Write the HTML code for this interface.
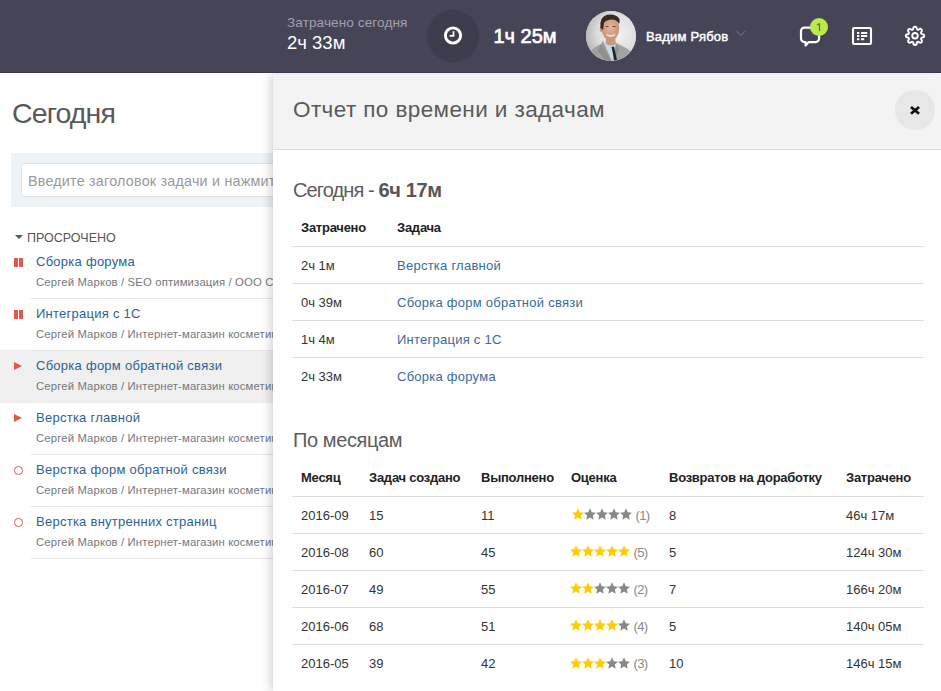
<!DOCTYPE html>
<html><head><meta charset="utf-8">
<style>
*{margin:0;padding:0;box-sizing:border-box}
html,body{width:941px;height:691px;overflow:hidden;background:#fff;font-family:"Liberation Sans",sans-serif;position:relative}
.abs{position:absolute;white-space:nowrap}
#hdr{position:absolute;left:0;top:0;width:941px;height:73px;background:#464558;border-bottom:1px solid #3c3b4c}
.muted{color:#a09fad;font-size:13.6px;letter-spacing:0.08px;left:287px;top:15px;line-height:16px}
.spent{color:#fff;font-size:18.5px;left:287px;top:33px;line-height:20px}
.clockc{position:absolute;left:427px;top:10px;width:52px;height:52px;border-radius:50%;background:#3e3d4e}
.timer{color:#fff;font-size:20px;letter-spacing:0px;font-weight:400;-webkit-text-stroke:0.7px #fff;left:493.5px;top:25px;line-height:22px}
.avatar{position:absolute;left:586px;top:11px;width:50px;height:50px;border-radius:50%;overflow:hidden;background:#ddd}
.uname{color:#fff;font-size:13px;letter-spacing:0.2px;font-weight:400;-webkit-text-stroke:0.45px #fff;left:646px;top:29px;line-height:15px}
#page h1{position:absolute;left:12px;top:97.3px;font-size:28.5px;letter-spacing:-0.9px;font-weight:400;color:#595959;line-height:32px}
.addbox{position:absolute;left:11px;top:153px;width:300px;height:54px;background:#eef3f7}
.inp{position:absolute;left:21px;top:163px;width:300px;height:34px;background:#fff;border:1px solid #e2e5e8;border-radius:3px}
.ph{color:#999;font-size:14.3px;letter-spacing:0.23px;left:28px;top:173px;line-height:17px}
.sec{color:#555;font-size:12.5px;left:27px;top:231px;line-height:14px}
.tri{position:absolute;left:14.9px;top:234.8px;width:0;height:0;border-left:4.2px solid transparent;border-right:4.2px solid transparent;border-top:4.5px solid #555}
#panel{position:absolute;left:273px;top:74px;width:668px;height:617px;background:#fff;box-shadow:-3px 0 9px rgba(0,0,0,0.17)}
.phead{position:absolute;left:0;top:0;width:668px;height:76px;background:#f3f3f3;border-bottom:1px solid #dedede}
.ptitle{color:#5a5a5a;font-size:22.5px;letter-spacing:0.4px;left:20px;top:23px;line-height:26px}
.close{position:absolute;left:622px;top:16px;width:40px;height:40px;border-radius:50%;background:#e7e7e7}
.h2{color:#5c5c5c;font-size:20px;letter-spacing:-0.9px;left:20px;line-height:22px}
table{position:absolute;border-collapse:collapse;font-size:13px}
th{font-weight:700;color:#222;text-align:left;height:36px;padding:0 0 0 9px;letter-spacing:-0.25px;border-bottom:1px solid #dddddd;white-space:nowrap}
td{color:#333;height:37px;padding:2px 0 0 9px;border-top:1px solid #dddddd;white-space:nowrap}
tr:nth-child(2) td{border-top:none}
#hdr,.muted,.spent,.clockc,.timer,.avatar,.uname,#hicons{z-index:5}
#panel{z-index:1}
a{color:#3a6b9a;text-decoration:none;letter-spacing:0.25px}
.ic{position:absolute}
.pause{left:14px;top:258px;width:9px;height:9px;border-left:4px solid #e0574f;border-right:4px solid #e0574f}
.play{left:14px;top:258px;width:0;height:0;border-top:4.6px solid transparent;border-bottom:4.6px solid transparent;border-left:8.2px solid #e0574f}
.circ{left:14.2px;top:258px;width:8.7px;height:8.7px;border:1.6px solid #e0574f;border-radius:50%}
.hlr{position:absolute;left:0;top:350px;width:273px;height:53px;background:#f0f0f0}
.tt{left:36px;top:254px;font-size:13px;letter-spacing:0.26px;color:#2c6394;line-height:16px}
.ts{left:36px;top:276px;font-size:11.3px;letter-spacing:0.15px;color:#747880;line-height:13px}
.ln{position:absolute;left:31px;width:242px;height:1px;background:#e6e6e6}
.close svg{position:absolute;left:0;top:0}
.stars{display:inline-block;vertical-align:-1.3px}
.cnt{color:#888;margin-left:2.6px;letter-spacing:-0.7px}

</style></head><body>
<div id="hdr"></div>
<div class="abs muted">Затрачено сегодня</div>
<div class="abs spent">2ч 33м</div>
<div class="clockc"></div>
<div class="abs timer">1ч 25м</div>
<div class="avatar"><svg width="50" height="50" viewBox="0 0 50 50">
<defs><radialGradient id="bgg" cx="0.62" cy="0.45" r="0.65"><stop offset="0" stop-color="#f4f4f4"/><stop offset="0.6" stop-color="#dedede"/><stop offset="1" stop-color="#b4b4b4"/></radialGradient>
<radialGradient id="skin" cx="0.5" cy="0.45" r="0.6"><stop offset="0" stop-color="#e2b59a"/><stop offset="1" stop-color="#c28f74"/></radialGradient></defs>
<rect width="50" height="50" fill="url(#bgg)"/>
<path d="M16 29 Q22 33 30 31 L33 35 L31 50 L23 50 L16 36 Z" fill="#c9d9e8"/>
<path d="M0 50 L3 42 Q8 36 15 33 L17 30 L26 50 Z" fill="#9f9f9f"/>
<path d="M15 33 L22 44 L25 50 L20 50 L12 40 Z" fill="#8f8f8f"/>
<path d="M30 32 L36 35 Q44 38 48 45 L50 50 L28 50 Z" fill="#a2a2a2"/>
<path d="M30 33 L33 38 L29 50 L27 48 Z" fill="#909090"/>
<path d="M25.5 36 L28 35.5 L31 49 L28.5 50 Z" fill="#1c2230"/>
<path d="M20 26 L29 26 L30 33 Q25 36 20 33 Z" fill="#c99a7e"/>
<ellipse cx="24.5" cy="17.5" rx="8.8" ry="12" fill="url(#skin)"/>
<ellipse cx="15.5" cy="18" rx="1.8" ry="3" fill="#c9937a"/>
<path d="M14.5 17 Q13 6 21 3.8 Q30 2.2 33.5 8 Q34 11 33 13 Q31 8.5 26 8.5 Q20 8.5 18 12 L17 19 Z" fill="#3a2a22"/>
<path d="M20.5 23.5 Q25 26.5 29 23.5" fill="none" stroke="#f2ece6" stroke-width="1.5"/>
<path d="M19.5 15.5 H22.5 M26.5 15.5 H29.5" stroke="#6b4a3a" stroke-width="1"/>
</svg></div>
<div class="abs uname">Вадим Рябов</div>

<svg class="abs" id="hicons" style="left:0;top:0" width="941" height="73" viewBox="0 0 941 73">
<circle cx="453" cy="35.5" r="7.6" fill="none" stroke="#fff" stroke-width="2.9"/>
<path d="M453.5 31.2 V35.8 H449.6" fill="none" stroke="#fff" stroke-width="1.8"/>
<path d="M736.6 31.3 L740.8 35.5 L745 31.3" fill="none" stroke="#838294" stroke-width="1"/>
<path d="M804.5 27.6 H815.6 A3.5 3.5 0 0 1 819.1 31.1 V38.6 A3.5 3.5 0 0 1 815.6 42.1 H808.6 L805.6 45.6 V42.1 H804.5 A3.5 3.5 0 0 1 801 38.6 V31.1 A3.5 3.5 0 0 1 804.5 27.6 Z" fill="none" stroke="#fff" stroke-width="2.2" stroke-linejoin="round"/>
<circle cx="819" cy="27" r="9" fill="#b9eb4b"/><path d="M819.5 23.2 V31 M819.5 23.4 L817 25.3" fill="none" stroke="#7a6a30" stroke-width="1.2"/>
<rect x="853" y="28" width="18" height="16" rx="1" fill="none" stroke="#fff" stroke-width="2.1"/>
<rect x="857" y="32" width="2.3" height="2" fill="#fff"/><rect x="857" y="35" width="2.3" height="2" fill="#fff"/><rect x="857" y="38.2" width="2.3" height="2" fill="#fff"/>
<rect x="861" y="32" width="6.2" height="2" fill="#fff"/><rect x="861" y="35" width="6.2" height="2" fill="#fff"/><rect x="861" y="38.2" width="3.2" height="2" fill="#fff"/>
<g transform="translate(905 25.8) scale(0.8333)" fill="none" stroke="#fff" stroke-width="2.3" stroke-linecap="round" stroke-linejoin="round"><circle cx="12" cy="12" r="3.3"/><path d="M19.4 15a1.650 1.650 0 0 0 .33 1.820l.06.06a2 2 0 0 1 0 2.830 2 2 0 0 1-2.830 0l-.06-.06a1.650 1.650 0 0 0-1.820-.33 1.650 1.650 0 0 0-1 1.510V21a2 2 0 0 1-2 2 2 2 0 0 1-2-2v-.09A1.650 1.650 0 0 0 9 19.400a1.650 1.650 0 0 0-1.820.33l-.06.06a2 2 0 0 1-2.830 0 2 2 0 0 1 0-2.830l.06-.06a1.650 1.650 0 0 0 .33-1.820 1.650 1.650 0 0 0-1.510-1H3a2 2 0 0 1-2-2 2 2 0 0 1 2-2h.09A1.650 1.650 0 0 0 4.600 9a1.650 1.650 0 0 0-.33-1.820l-.06-.06a2 2 0 0 1 0-2.830 2 2 0 0 1 2.830 0l.06.06a1.650 1.650 0 0 0 1.820.33H9a1.650 1.650 0 0 0 1-1.510V3a2 2 0 0 1 2-2 2 2 0 0 1 2 2v.09a1.650 1.650 0 0 0 1 1.510 1.650 1.650 0 0 0 1.820-.33l.06-.06a2 2 0 0 1 2.830 0 2 2 0 0 1 0 2.830l-.06.06a1.650 1.650 0 0 0-.33 1.820V9a1.650 1.650 0 0 0 1.510 1H21a2 2 0 0 1 2 2 2 2 0 0 1-2 2h-.09a1.650 1.650 0 0 0-1.510 1z"/></g>
</svg>

<div id="page">
<h1>Сегодня</h1>
<div class="addbox"></div>
<div class="inp"></div>
<div class="abs ph">Введите заголовок задачи и нажмите Enter</div>
<div class="tri"></div>
<div class="abs sec">ПРОСРОЧЕНО</div>
<div class="hlr"></div>
<div class="ic pause" style="margin-top:0px"></div><div class="abs tt" style="margin-top:0px">Сборка форума</div><div class="abs ts" style="margin-top:0px">Сергей Марков / SEO оптимизация / ООО Строй</div><div class="ln" style="top:298px"></div>
<div class="ic pause" style="margin-top:52px"></div><div class="abs tt" style="margin-top:52px">Интеграция с 1С</div><div class="abs ts" style="margin-top:52px">Сергей Марков / Интернет-магазин косметики</div><div class="ln" style="top:350px"></div>
<div class="ic play" style="margin-top:104px"></div><div class="abs tt" style="margin-top:104px">Сборка форм обратной связи</div><div class="abs ts" style="margin-top:104px">Сергей Марков / Интернет-магазин косметики</div>
<div class="ic play" style="margin-top:156px"></div><div class="abs tt" style="margin-top:156px">Верстка главной</div><div class="abs ts" style="margin-top:156px">Сергей Марков / Интернет-магазин косметики</div><div class="ln" style="top:454px"></div>
<div class="ic circ" style="margin-top:208px"></div><div class="abs tt" style="margin-top:208px">Верстка форм обратной связи</div><div class="abs ts" style="margin-top:208px">Сергей Марков / Интернет-магазин косметики</div><div class="ln" style="top:506px"></div>
<div class="ic circ" style="margin-top:260px"></div><div class="abs tt" style="margin-top:260px">Верстка внутренних страниц</div><div class="abs ts" style="margin-top:260px">Сергей Марков / Интернет-магазин косметики</div><div class="ln" style="top:558px"></div>
</div>

<div id="panel">
<div class="phead"></div>
<div class="abs ptitle">Отчет по времени и задачам</div>
<div class="close"><svg width="40" height="40"><path d="M16 17 L24 23.7 M24 17 L16 23.7" stroke="#111" stroke-width="2.8" stroke-linecap="butt"/></svg></div>
<div class="abs h2" style="top:105px">Сегодня - <b style="letter-spacing:-0.35px;color:#555">6ч 17м</b></div>
<table style="left:19px;top:136px;width:632px">
<tr><th style="width:96px">Затрачено</th><th>Задача</th></tr>
<tr><td>2ч 1м</td><td><a>Верстка главной</a></td></tr>
<tr><td>0ч 39м</td><td><a>Сборка форм обратной связи</a></td></tr>
<tr><td>1ч 4м</td><td><a>Интеграция с 1С</a></td></tr>
<tr><td>2ч 33м</td><td><a>Сборка форума</a></td></tr>
</table>
<div class="abs h2" style="top:355.3px;letter-spacing:-0.4px">По месяцам</div>
<table style="left:19px;top:386px;width:632px">
<tr><th style="width:68px">Месяц</th><th style="width:112px">Задач создано</th><th style="width:90px">Выполнено</th><th style="width:98px">Оценка</th><th style="width:177px">Возвратов на доработку</th><th>Затрачено</th></tr>
<tr><td>2016-09</td><td>15</td><td>11</td><td><svg class="stars" style="margin-left:1px" width="61" height="13" viewBox="0 0 61 13"><polygon points="6.00,0.30 7.76,4.17 11.99,4.65 8.85,7.53 9.70,11.70 6.00,9.60 2.30,11.70 3.15,7.53 0.01,4.65 4.24,4.17" fill="#ffcc00"/><polygon points="18.00,0.30 19.76,4.17 23.99,4.65 20.85,7.53 21.70,11.70 18.00,9.60 14.30,11.70 15.15,7.53 12.01,4.65 16.24,4.17" fill="#888888"/><polygon points="30.00,0.30 31.76,4.17 35.99,4.65 32.85,7.53 33.70,11.70 30.00,9.60 26.30,11.70 27.15,7.53 24.01,4.65 28.24,4.17" fill="#888888"/><polygon points="42.00,0.30 43.76,4.17 47.99,4.65 44.85,7.53 45.70,11.70 42.00,9.60 38.30,11.70 39.15,7.53 36.01,4.65 40.24,4.17" fill="#888888"/><polygon points="54.00,0.30 55.76,4.17 59.99,4.65 56.85,7.53 57.70,11.70 54.00,9.60 50.30,11.70 51.15,7.53 48.01,4.65 52.24,4.17" fill="#888888"/></svg><span class="cnt">(1)</span></td><td>8</td><td>46ч 17м</td></tr>
<tr><td>2016-08</td><td>60</td><td>45</td><td><svg class="stars" style="margin-left:-1px" width="61" height="13" viewBox="0 0 61 13"><polygon points="6.00,0.30 7.76,4.17 11.99,4.65 8.85,7.53 9.70,11.70 6.00,9.60 2.30,11.70 3.15,7.53 0.01,4.65 4.24,4.17" fill="#ffcc00"/><polygon points="18.00,0.30 19.76,4.17 23.99,4.65 20.85,7.53 21.70,11.70 18.00,9.60 14.30,11.70 15.15,7.53 12.01,4.65 16.24,4.17" fill="#ffcc00"/><polygon points="30.00,0.30 31.76,4.17 35.99,4.65 32.85,7.53 33.70,11.70 30.00,9.60 26.30,11.70 27.15,7.53 24.01,4.65 28.24,4.17" fill="#ffcc00"/><polygon points="42.00,0.30 43.76,4.17 47.99,4.65 44.85,7.53 45.70,11.70 42.00,9.60 38.30,11.70 39.15,7.53 36.01,4.65 40.24,4.17" fill="#ffcc00"/><polygon points="54.00,0.30 55.76,4.17 59.99,4.65 56.85,7.53 57.70,11.70 54.00,9.60 50.30,11.70 51.15,7.53 48.01,4.65 52.24,4.17" fill="#ffcc00"/></svg><span class="cnt">(5)</span></td><td>5</td><td>124ч 30м</td></tr>
<tr><td>2016-07</td><td>49</td><td>55</td><td><svg class="stars" style="margin-left:-1px" width="61" height="13" viewBox="0 0 61 13"><polygon points="6.00,0.30 7.76,4.17 11.99,4.65 8.85,7.53 9.70,11.70 6.00,9.60 2.30,11.70 3.15,7.53 0.01,4.65 4.24,4.17" fill="#ffcc00"/><polygon points="18.00,0.30 19.76,4.17 23.99,4.65 20.85,7.53 21.70,11.70 18.00,9.60 14.30,11.70 15.15,7.53 12.01,4.65 16.24,4.17" fill="#ffcc00"/><polygon points="30.00,0.30 31.76,4.17 35.99,4.65 32.85,7.53 33.70,11.70 30.00,9.60 26.30,11.70 27.15,7.53 24.01,4.65 28.24,4.17" fill="#888888"/><polygon points="42.00,0.30 43.76,4.17 47.99,4.65 44.85,7.53 45.70,11.70 42.00,9.60 38.30,11.70 39.15,7.53 36.01,4.65 40.24,4.17" fill="#888888"/><polygon points="54.00,0.30 55.76,4.17 59.99,4.65 56.85,7.53 57.70,11.70 54.00,9.60 50.30,11.70 51.15,7.53 48.01,4.65 52.24,4.17" fill="#888888"/></svg><span class="cnt">(2)</span></td><td>7</td><td>166ч 20м</td></tr>
<tr><td>2016-06</td><td>68</td><td>51</td><td><svg class="stars" style="margin-left:-1px" width="61" height="13" viewBox="0 0 61 13"><polygon points="6.00,0.30 7.76,4.17 11.99,4.65 8.85,7.53 9.70,11.70 6.00,9.60 2.30,11.70 3.15,7.53 0.01,4.65 4.24,4.17" fill="#ffcc00"/><polygon points="18.00,0.30 19.76,4.17 23.99,4.65 20.85,7.53 21.70,11.70 18.00,9.60 14.30,11.70 15.15,7.53 12.01,4.65 16.24,4.17" fill="#ffcc00"/><polygon points="30.00,0.30 31.76,4.17 35.99,4.65 32.85,7.53 33.70,11.70 30.00,9.60 26.30,11.70 27.15,7.53 24.01,4.65 28.24,4.17" fill="#ffcc00"/><polygon points="42.00,0.30 43.76,4.17 47.99,4.65 44.85,7.53 45.70,11.70 42.00,9.60 38.30,11.70 39.15,7.53 36.01,4.65 40.24,4.17" fill="#ffcc00"/><polygon points="54.00,0.30 55.76,4.17 59.99,4.65 56.85,7.53 57.70,11.70 54.00,9.60 50.30,11.70 51.15,7.53 48.01,4.65 52.24,4.17" fill="#888888"/></svg><span class="cnt">(4)</span></td><td>5</td><td>140ч 05м</td></tr>
<tr><td>2016-05</td><td>39</td><td>42</td><td><svg class="stars" style="margin-left:-1px" width="61" height="13" viewBox="0 0 61 13"><polygon points="6.00,0.30 7.76,4.17 11.99,4.65 8.85,7.53 9.70,11.70 6.00,9.60 2.30,11.70 3.15,7.53 0.01,4.65 4.24,4.17" fill="#ffcc00"/><polygon points="18.00,0.30 19.76,4.17 23.99,4.65 20.85,7.53 21.70,11.70 18.00,9.60 14.30,11.70 15.15,7.53 12.01,4.65 16.24,4.17" fill="#ffcc00"/><polygon points="30.00,0.30 31.76,4.17 35.99,4.65 32.85,7.53 33.70,11.70 30.00,9.60 26.30,11.70 27.15,7.53 24.01,4.65 28.24,4.17" fill="#ffcc00"/><polygon points="42.00,0.30 43.76,4.17 47.99,4.65 44.85,7.53 45.70,11.70 42.00,9.60 38.30,11.70 39.15,7.53 36.01,4.65 40.24,4.17" fill="#888888"/><polygon points="54.00,0.30 55.76,4.17 59.99,4.65 56.85,7.53 57.70,11.70 54.00,9.60 50.30,11.70 51.15,7.53 48.01,4.65 52.24,4.17" fill="#888888"/></svg><span class="cnt">(3)</span></td><td>10</td><td>146ч 15м</td></tr>
</table>
</div>
</body></html>
